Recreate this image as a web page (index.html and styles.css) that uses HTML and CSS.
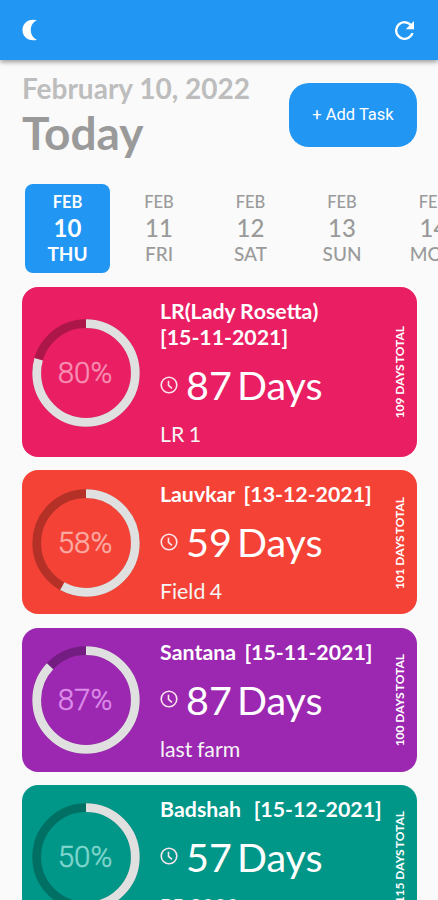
FILE: index.html
```html
<!DOCTYPE html>
<html lang="en">
<head>
  <meta charset="UTF-8">
  <meta name="viewport" content="width=device-width, initial-scale=1.0">
  <title>Today</title>
  <link rel="stylesheet" href="styles.css">
</head>
<body>
  <header class="appbar">
    <svg class="moon" viewBox="0 0 16 22"><path d="M15 1.2C6.500 -1 0.500 4 0.500 11s6 12 14.500 9.800C10.800 19 8.800 15.200 8.800 11S10.800 3 15 1.200z"/></svg>
    <svg class="refresh" viewBox="4 4 16 16"><path d="M17.650 6.350A7.958 7.958 0 0 0 12 4a8 8 0 1 0 7.730 10h-2.080A6 6 0 1 1 12 6c1.660 0 3.140.690 4.220 1.780L13 11h7V4z"/></svg>
  </header>

  <section class="top">
    <div>
      <div class="date">February 10, 2022</div>
      <h1 class="today">Today</h1>
    </div>
    <button class="add">+ Add Task</button>
  </section>

  <nav class="days">
    <div class="day active"><span class="month">FEB</span><span class="num">10</span><span class="week">THU</span></div>
    <div class="day"><span class="month">FEB</span><span class="num">11</span><span class="week">FRI</span></div>
    <div class="day"><span class="month">FEB</span><span class="num">12</span><span class="week">SAT</span></div>
    <div class="day"><span class="month">FEB</span><span class="num">13</span><span class="week">SUN</span></div>
    <div class="day"><span class="month">FEB</span><span class="num">14</span><span class="week">MON</span></div>
  </nav>

  <main class="tasks">
    <article class="card pink">
      <div class="ring">
        <svg viewBox="0 0 108 108"><circle class="track" cx="54" cy="54" r="49.300"/><circle class="bar" cx="54" cy="54" r="49.300" pathLength="100" stroke-dasharray="79.500 100"/></svg>
        <span>80%</span>
      </div>
      <div class="info">
        <h2>LR(Lady Rosetta)<br>[15-11-2021]</h2>
        <div class="left"><svg class="clock" viewBox="0 0 18 18"><circle cx="9" cy="9" r="7.800"/><path d="M8.500 4.800V9.300L12 12.300"/></svg>87 Days</div>
        <div class="field">LR 1</div>
      </div>
      <div class="total">109&nbsp; DAYS TOTAL</div>
    </article>

    <article class="card red">
      <div class="ring">
        <svg viewBox="0 0 108 108"><circle class="track" cx="54" cy="54" r="49.300"/><circle class="bar" cx="54" cy="54" r="49.300" pathLength="100" stroke-dasharray="58 100"/></svg>
        <span>58%</span>
      </div>
      <div class="info">
        <h2>Lauvkar&nbsp; [13-12-2021]</h2>
        <div class="left"><svg class="clock" viewBox="0 0 18 18"><circle cx="9" cy="9" r="7.800"/><path d="M8.500 4.800V9.300L12 12.300"/></svg>59 Days</div>
        <div class="field">Field 4</div>
      </div>
      <div class="total">101&nbsp; DAYS TOTAL</div>
    </article>

    <article class="card purple">
      <div class="ring">
        <svg viewBox="0 0 108 108"><circle class="track" cx="54" cy="54" r="49.300"/><circle class="bar" cx="54" cy="54" r="49.300" pathLength="100" stroke-dasharray="87 100"/></svg>
        <span>87%</span>
      </div>
      <div class="info">
        <h2>Santana&nbsp; [15-11-2021]</h2>
        <div class="left"><svg class="clock" viewBox="0 0 18 18"><circle cx="9" cy="9" r="7.800"/><path d="M8.500 4.800V9.300L12 12.300"/></svg>87 Days</div>
        <div class="field">last farm</div>
      </div>
      <div class="total">100&nbsp; DAYS TOTAL</div>
    </article>

    <article class="card teal">
      <div class="ring">
        <svg viewBox="0 0 108 108"><circle class="track" cx="54" cy="54" r="49.300"/><circle class="bar" cx="54" cy="54" r="49.300" pathLength="100" stroke-dasharray="50 100"/></svg>
        <span>50%</span>
      </div>
      <div class="info">
        <h2>Badshah&nbsp;&nbsp; [15-12-2021]</h2>
        <div class="left"><svg class="clock" viewBox="0 0 18 18"><circle cx="9" cy="9" r="7.800"/><path d="M8.500 4.800V9.300L12 12.300"/></svg>57 Days</div>
        <div class="field">PP 2000</div>
      </div>
      <div class="total">115&nbsp; DAYS TOTAL</div>
    </article>
  </main>
</body>
</html>
```

FILE: styles.css
```css
* { box-sizing: border-box; }
body { margin: 0; height: 900px; overflow: hidden; background: #fafafa; font-family: Lato, sans-serif; }
h1, h2 { margin: 0; }

.appbar { height: 60px; padding: 0 24px 0 22px; display: flex; align-items: center; justify-content: space-between; background: #2196f3; box-shadow: 0 2px 5px rgba(0, 0, 0, 0.4); }
.appbar svg { fill: #fff; }
.moon { width: 16px; height: 22px; }
.refresh { width: 19px; height: 19px; }

.top { height: 124px; padding: 11px 21px 0 22px; display: flex; justify-content: space-between; align-items: flex-start; }
.date { font-size: 28px; line-height: 35px; font-weight: 700; color: #bdbdbd; }
.today { font-size: 46px; line-height: 54px; font-weight: 700; color: #9a9a9a; }
.add { width: 128px; height: 64px; margin-top: 12px; padding: 0 0 2px; border: 0; border-radius: 20px; background: #2196f3; color: #fff; font: 16.500px Roboto, sans-serif; }

.days { height: 103px; padding-left: 25px; display: flex; gap: 6.500px; overflow: hidden; }
.day { flex: none; width: 85px; height: 89px; padding-top: 8px; display: flex; flex-direction: column; align-items: center; border-radius: 8px; color: #9a9a9a; font-weight: 500; }
.month { font-size: 16.500px; line-height: 21px; }
.num { font-size: 24px; line-height: 30px; }
.week { font-size: 19px; line-height: 21px; }
.active { background: #2196f3; color: #fff; font-weight: 700; }

.tasks { padding: 0 21px 0 22px; display: flex; flex-direction: column; gap: 13.300px; }
.card { flex: none; padding: 11px 9px 10px 10px; display: flex; align-items: center; border-radius: 16px; color: #fff; }
.pink { background: #e91e63; --pale: #f78fb3; }
.red { background: #f44336; --pale: #fbaba5; }
.purple { background: #9c27b0; --pale: #dc8ce9; }
.teal { background: #009688; --pale: #80d6cd; }

.ring { width: 108px; height: 108px; display: grid; place-items: center; }
.ring svg, .ring span { grid-area: 1 / 1; }
.ring svg { width: 108px; height: 108px; transform: rotate(-90deg); }
.ring circle { fill: none; stroke-width: 8.800; }
.track { stroke: rgba(0, 0, 0, 0.26); }
.bar { stroke: #e0e0e0; }
.ring span { margin-right: 2px; font: 300 29.500px Roboto, sans-serif; color: var(--pale); -webkit-text-stroke: 0.5px var(--pale); }

.info { flex: 1; margin-left: 20px; white-space: nowrap; }
.info h2 { font-size: 21.300px; line-height: 26px; font-weight: 700; word-spacing: -1px; font-kerning: none; }
.left { height: 48px; margin: 11px 0 13px; display: flex; align-items: center; gap: 8px; font-size: 39.500px; line-height: 48px; word-spacing: -5px; }
.clock { width: 18px; height: 18px; margin-top: -1px; fill: none; stroke: #fce4ec; stroke-width: 1.600; }
.field { font-size: 21.300px; line-height: 25px; color: #f5f5f5; word-spacing: -1px; }
.total { writing-mode: vertical-rl; transform: rotate(180deg); font-size: 12px; line-height: 16px; font-weight: 700; word-spacing: -1.500px; white-space: nowrap; }
```
